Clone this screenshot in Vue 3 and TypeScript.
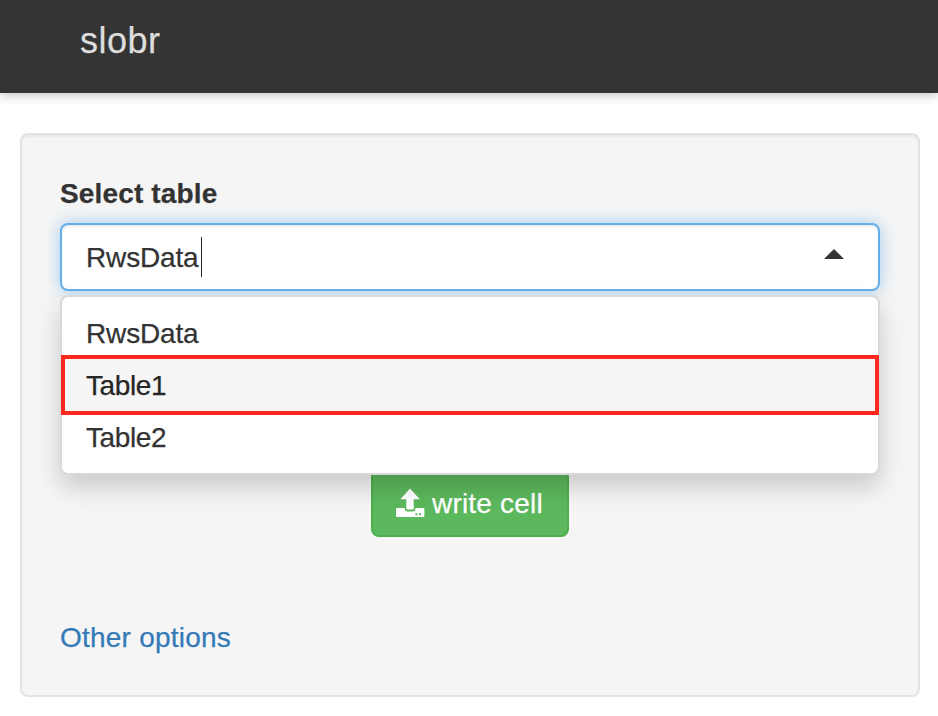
<script setup lang="ts">
import { ref } from 'vue'

const tables: string[] = ['RwsData', 'Table1', 'Table2']
const selected = ref<string>('RwsData')
const active = ref<string>('Table1')
</script>

<template>
  <div class="page">
    <header class="navbar"><span class="brand">slobr</span></header>
    <main class="well">
      <label class="label">Select table</label>
      <div class="select">
        <div class="control">
          <span class="value">{{ selected }}</span>
          <span class="cursor"></span>
          <svg class="caret" width="20" height="10" viewBox="0 0 20 10"><path d="M0 10 10 0 20 10z" fill="#333" /></svg>
        </div>
        <div class="dropdown">
          <div
            v-for="t in tables"
            :key="t"
            class="option"
            :class="{ active: t === active, numbered: /\d$/.test(t) }"
            @mouseenter="active = t"
            @click="selected = t"
          >{{ t }}</div>
        </div>
      </div>
      <div class="actions">
        <button class="btn" type="button">
          <svg class="icon" width="28" height="28" viewBox="0 0 28 28">
            <path
              fill="#fff"
              fill-rule="evenodd"
              d="M14 -0.4 23.8 10.2H17.7V19.4Q17.7 20.6 16.5 20.6H11.5Q10.3 20.6 10.3 19.4V10.2H4.4zM1.2 19H8.8V19.8Q8.8 22.4 11.4 22.4H16.8Q19.4 22.4 19.4 19.8V19H27.2Q28.4 19 28.4 20.2V26.8Q28.4 28 27.2 28H1.2Q0 28 0 26.8V20.2Q0 19 1.2 19zM19.4 24.2V26.2H21.4V24.2zM23 24.2V26.2H25V24.2z"
            />
          </svg>
          <span class="btn-text">write cell</span>
        </button>
      </div>
      <a class="link">Other options</a>
    </main>
  </div>
</template>

<style>
body {
  margin: 0;
  background: #fff;
}
</style>

<style scoped>
.page {
  height: 716px;
  overflow: hidden;
  font-family: "Liberation Sans", Arial, sans-serif;
  font-size: 28px;
  line-height: 40px;
  color: #333;
  -webkit-text-stroke: 0.25px currentColor;
}
.navbar {
  box-sizing: border-box;
  height: 93px;
  padding: 21px 80px 0;
  background: #343434;
  box-shadow: 0 2px 10px rgba(0, 0, 0, 0.25);
}
.brand {
  font-size: 36px;
  letter-spacing: 0.5px;
  color: #ddd;
}
.well {
  box-sizing: border-box;
  display: flex;
  flex-direction: column;
  height: 564px;
  margin: 40px 18px 0 20px;
  padding: 38px;
  border: 2px solid #e3e3e3;
  border-radius: 8px;
  background: #f5f5f5;
  box-shadow: inset 0 2px 2px rgba(0, 0, 0, 0.05);
}
.label {
  box-sizing: border-box;
  flex: none;
  height: 50px;
  padding-top: 1px;
  font-weight: bold;
  letter-spacing: 0.15px;
}
.select {
  position: relative;
  flex: none;
}
.control {
  box-sizing: border-box;
  display: flex;
  align-items: center;
  height: 68px;
  padding: 0 34px 0 24px;
  border: 2px solid #66afe9;
  border-radius: 8px;
  background: #fff;
  box-shadow: inset 0 2px 2px rgba(0, 0, 0, 0.075), 0 0 16px rgba(102, 175, 233, 0.6);
}
.value {
  padding-top: 2px;
  letter-spacing: -0.15px;
}
.cursor {
  width: 1px;
  height: 40px;
  margin-left: 2px;
  background: #222;
}
.caret {
  margin: 0 0 6px auto;
}
.dropdown {
  box-sizing: border-box;
  position: absolute;
  z-index: 2;
  top: 72px;
  left: 0;
  width: 100%;
  height: 180px;
  padding: 10px 0;
  border: 2px solid #d9d9d9;
  border-radius: 8px;
  background: #fff;
  background-clip: padding-box;
  box-shadow: 0 12px 24px rgba(0, 0, 0, 0.175);
}
.option {
  height: 52px;
  padding: 0 24px;
  line-height: 54px;
  letter-spacing: -0.15px;
}
.option.numbered {
  letter-spacing: -0.4px;
}
.option.active {
  position: relative;
  background: #f5f5f5;
  color: #262626;
}
.option.active::after {
  content: "";
  position: absolute;
  inset: -4px -1px;
  border: 4px solid #fc291c;
}
.actions {
  display: flex;
  flex: none;
  justify-content: center;
  margin-top: 178px;
}
.btn {
  box-sizing: border-box;
  display: flex;
  align-items: center;
  gap: 8px;
  width: 198px;
  height: 68px;
  padding: 0 23px;
  border: 2px solid #4cae4c;
  border-radius: 8px;
  background: #5cb85c;
  color: #fff;
  font: inherit;
  white-space: nowrap;
}
.btn-text {
  padding-top: 1px;
  letter-spacing: 0.2px;
}
.icon {
  flex: none;
  overflow: visible;
}
.link {
  flex: none;
  margin-top: 81px;
  letter-spacing: 0.23px;
  color: #337ab7;
}
</style>
